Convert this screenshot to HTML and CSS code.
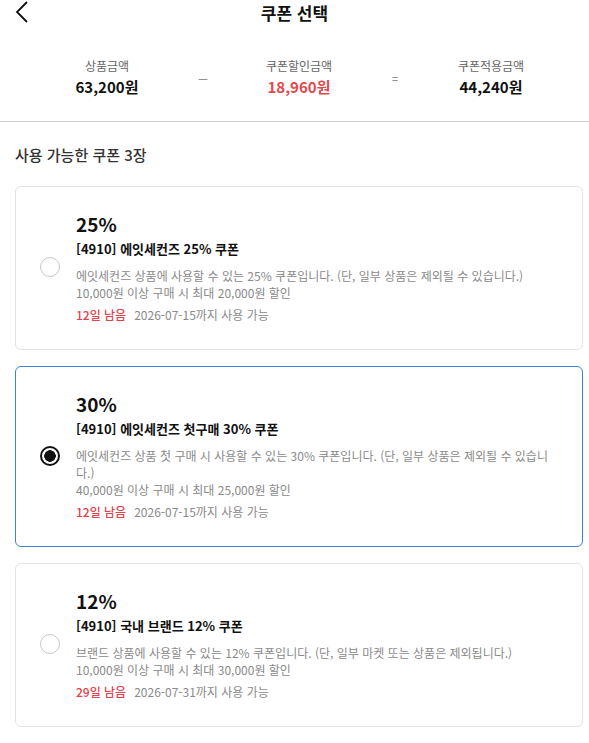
FILE: index.html
```html
<!DOCTYPE html>
<html lang="ko">
<head>
    <meta charset="UTF-8">
    <meta name="viewport" content="width=device-width, initial-scale=1.0">
    <title>쿠폰 선택</title>
    <link rel="stylesheet" href="styles.css">
</head>
<body>
    <header class="top-bar">
        <button class="back-btn" type="button" aria-label="뒤로">
            <svg width="14" height="22" viewBox="0 0 14 22">
                <path d="M12 1 L2 11 L12 21" fill="none" stroke="#111" stroke-width="1.8"/>
            </svg>
        </button>
        <h1 class="title">쿠폰 선택</h1>
    </header>

    <section class="summary">
        <div class="sum-item">
            <span class="sum-label">상품금액</span>
            <span class="sum-value">63,200원</span>
        </div>
        <span class="sum-op">—</span>
        <div class="sum-item">
            <span class="sum-label">쿠폰할인금액</span>
            <span class="sum-value discount">18,960원</span>
        </div>
        <span class="sum-op">=</span>
        <div class="sum-item">
            <span class="sum-label">쿠폰적용금액</span>
            <span class="sum-value">44,240원</span>
        </div>
    </section>

    <main class="coupons">
        <h2 class="count">사용 가능한 쿠폰 3장</h2>

        <label class="coupon">
            <input type="radio" name="coupon" class="radio">
            <div class="info">
                <div class="rate">25%</div>
                <div class="name">[4910] 에잇세컨즈 25% 쿠폰</div>
                <p class="desc">에잇세컨즈 상품에 사용할 수 있는 25% 쿠폰입니다. (단, 일부 상품은 제외될 수 있습니다.)<br>10,000원 이상 구매 시 최대 20,000원 할인</p>
                <div class="meta"><span class="left">12일 남음</span><span class="until">2026-07-15까지 사용 가능</span></div>
            </div>
        </label>

        <label class="coupon selected">
            <input type="radio" name="coupon" class="radio" checked>
            <div class="info">
                <div class="rate">30%</div>
                <div class="name">[4910] 에잇세컨즈 첫구매 30% 쿠폰</div>
                <p class="desc">에잇세컨즈 상품 첫 구매 시 사용할 수 있는 30% 쿠폰입니다. (단, 일부 상품은 제외될 수 있습니다.)<br>40,000원 이상 구매 시 최대 25,000원 할인</p>
                <div class="meta"><span class="left">12일 남음</span><span class="until">2026-07-15까지 사용 가능</span></div>
            </div>
        </label>

        <label class="coupon">
            <input type="radio" name="coupon" class="radio">
            <div class="info">
                <div class="rate">12%</div>
                <div class="name">[4910] 국내 브랜드 12% 쿠폰</div>
                <p class="desc">브랜드 상품에 사용할 수 있는 12% 쿠폰입니다. (단, 일부 마켓 또는 상품은 제외됩니다.)<br>10,000원 이상 구매 시 최대 30,000원 할인</p>
                <div class="meta"><span class="left">29일 남음</span><span class="until">2026-07-31까지 사용 가능</span></div>
            </div>
        </label>
    </main>
</body>
</html>
```

FILE: styles.css
```css
body {
    margin: 0;
    font-family: "Noto Sans CJK KR", "Noto Sans", sans-serif;
    color: #111;
    background: #fff;
}
.top-bar {
    position: relative;
    height: 25px;
    display: flex;
    align-items: center;
    justify-content: center;
}
.back-btn {
    position: absolute;
    left: 15px;
    top: 1px;
    padding: 0;
    border: none;
    background: none;
}
.title {
    margin: 0;
    font-size: 17px;
    font-weight: 700;
}
.summary {
    display: grid;
    grid-template-columns: 120px 1fr 120px 1fr 120px;
    align-items: center;
    justify-items: center;
    padding: 32px 38px 22px 47px;
    border-bottom: 1px solid #cfcfcf;
}
.sum-item {
    display: flex;
    flex-direction: column;
    align-items: center;
}
.sum-label {
    font-size: 12px;
    color: #666;
    line-height: 18px;
}
.sum-value {
    font-size: 15px;
    font-weight: 700;
    line-height: 24px;
}
.discount {
    color: #e5484d;
}
.sum-op {
    color: #777;
    font-size: 11px;
}
.coupons {
    padding: 22px 6px 20px 15px;
}
.count {
    margin: 0 0 21px;
    font-size: 15px;
    font-weight: 500;
    color: #333;
}
.coupon {
    display: flex;
    align-items: center;
    gap: 16px;
    border: 1px solid #e4e4e4;
    border-radius: 6px;
    padding: 22px 26px 24px 24px;
    margin-bottom: 16px;
}
.coupon.selected {
    border-color: #3b82d6;
}
.radio {
    appearance: none;
    width: 20px;
    height: 20px;
    margin: 0;
    flex: none;
    border: 1.5px solid #c8c8c8;
    border-radius: 50%;
}
.radio:checked {
    border: 2.5px solid #111;
    background: radial-gradient(circle, #111 5.5px, #fff 6px);
}
.info {
    flex: 1;
}
.rate {
    font-size: 19px;
    font-weight: 600;
    line-height: 30px;
}
.name {
    font-size: 13px;
    font-weight: 700;
    line-height: 20px;
    margin-bottom: 8px;
}
.desc {
    margin: 0;
    font-size: 12px;
    line-height: 17px;
    color: #8a8a8a;
    word-break: break-all;
}
.meta {
    margin-top: 4px;
    font-size: 12px;
    line-height: 20px;
    color: #8a8a8a;
}
.left {
    color: #e2414c;
    font-weight: 500;
    margin-right: 8px;
}
```
